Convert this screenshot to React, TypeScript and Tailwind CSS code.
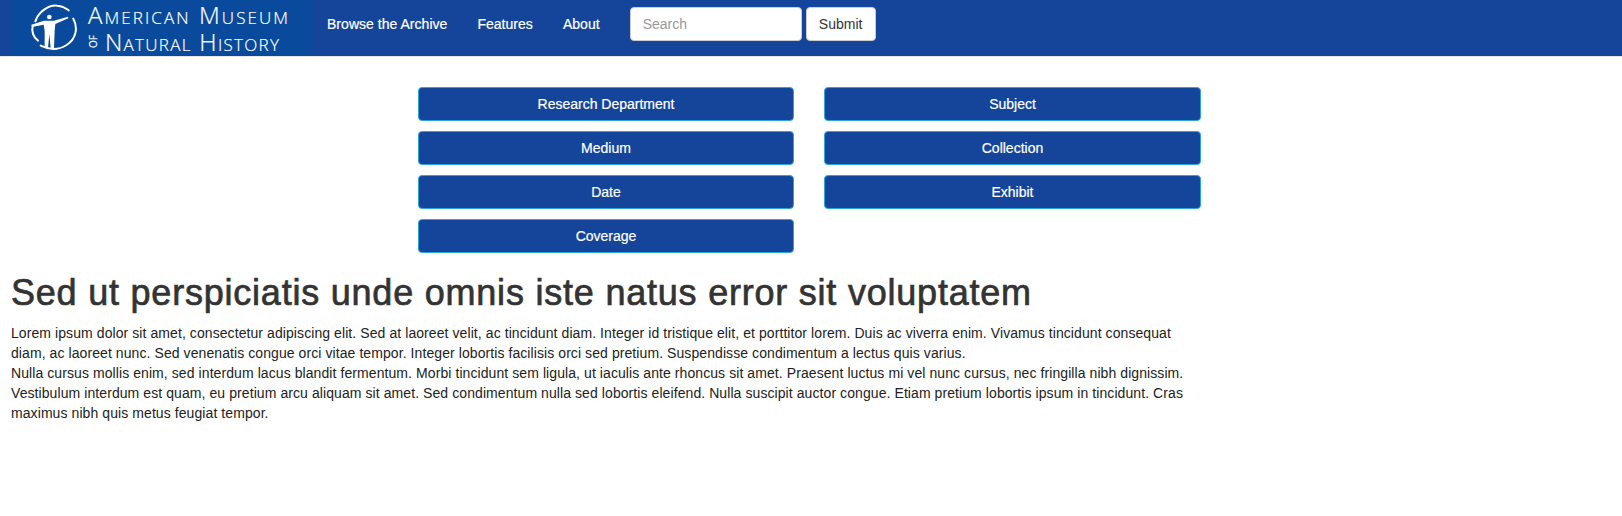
const NAV_LINKS = ["Browse the Archive", "Features", "About"];
const LEFT_BUTTONS = ["Research Department", "Medium", "Date", "Coverage"];
const RIGHT_BUTTONS = ["Subject", "Collection", "Exhibit"];

function LogoMark() {
  // viewBox is in 3x reference pixels
  return (
    <svg width="48" height="50" viewBox="30 15 144 150" fill="none" stroke="white" className="shrink-0">
      <path d="M46 70 C 55 42, 85 20, 112 23 C 125 24, 136 29, 146 37" strokeWidth="6" strokeLinecap="round" />
      <path d="M38 84 C 34 100, 40 118, 54 128" strokeWidth="6" strokeLinecap="round" />
      <path d="M160 62 C 176 92, 166 125, 140 141 C 118 155, 92 158, 62 143" strokeWidth="6" strokeLinecap="round" />
      <circle cx="88" cy="57" r="7" fill="white" stroke="none" />
      <path d="M34 80 L72 68 L102 68 L144 56 L145 61 L106 78 L104 100 L102 150 L92 150 L88 108 L84 150 L74 150 L74 100 L71 80 L36 87 Z" fill="white" stroke="none" />
    </svg>
  );
}

function Logo() {
  return (
    <div className="flex h-14 w-[300px] items-center gap-[10px] bg-[#0a4a9c] pl-[18px] pb-[1px] text-white font-['Open_Sans',sans-serif] font-light [-webkit-text-stroke:0.2px_white]">
      <LogoMark />
      <div className="flex flex-col [font-variant:small-caps]">
        <span className="text-[24px] leading-[27px] whitespace-nowrap tracking-[2.1px]">American Museum</span>
        <span className="flex items-center gap-[7px] text-[24px] leading-[27px] whitespace-nowrap tracking-[1.3px]">
          <span className="text-[10px] leading-[10px] tracking-normal uppercase font-normal [writing-mode:vertical-rl] rotate-180">of</span>
          Natural History
        </span>
      </div>
    </div>
  );
}

function CategoryButton({ label }: { label: string }) {
  return (
    <button className="h-[34px] w-full rounded border border-[#2fa4d8] bg-[#14459a] text-sm text-white [-webkit-text-stroke:0.2px_white]">
      {label}
    </button>
  );
}

export default function App() {
  return (
    <div className="min-h-screen bg-white font-['Liberation_Sans',Arial,sans-serif] text-sm text-[#333]">
      <nav className="flex h-[57px] items-start border-b border-[#e7e7e7] bg-[#14459a] pl-3">
        <Logo />
        <ul className="ml-[15px] flex gap-[30px] pt-[14px]">
          {NAV_LINKS.map((link) => (
            <li key={link} className="leading-5 tracking-[0.03px] text-white [-webkit-text-stroke:0.2px_white]">{link}</li>
          ))}
        </ul>
        <form className="ml-[30px] mt-[7px] flex gap-1">
          <input
            placeholder="Search"
            className="h-[34px] w-[172px] rounded border border-[#ccc] bg-white px-3 text-sm placeholder:text-[#999]"
          />
          <button type="button" className="h-[34px] w-[70px] rounded border border-[#ccc] bg-white text-sm text-[#333]">
            Submit
          </button>
        </form>
      </nav>

      <div className="ml-[418px] mt-[30px] grid w-[783px] grid-cols-[376px_377px] gap-x-[30px]">
        <div className="flex flex-col gap-[10px]">
          {LEFT_BUTTONS.map((label) => <CategoryButton key={label} label={label} />)}
        </div>
        <div className="flex flex-col gap-[10px]">
          {RIGHT_BUTTONS.map((label) => <CategoryButton key={label} label={label} />)}
        </div>
      </div>

      <main className="mt-5 w-[1200px] pl-[11px]">
        <h1 className="text-4xl leading-[40px] tracking-[0.78px] whitespace-nowrap [-webkit-text-stroke:0.7px_#333]">
          Sed ut perspiciatis unde omnis iste natus error sit voluptatem
        </h1>
        <p className="mt-[10px] leading-5 tracking-[0.08px] text-[#222]">
          Lorem ipsum dolor sit amet, consectetur adipiscing elit. Sed at laoreet velit, ac tincidunt diam. Integer id tristique elit, et porttitor lorem. Duis ac viverra enim. Vivamus tincidunt consequat diam, ac laoreet nunc. Sed venenatis congue orci vitae tempor. Integer lobortis facilisis orci sed pretium. Suspendisse condimentum a lectus quis varius.
          <br />
          Nulla cursus mollis enim, sed interdum lacus blandit fermentum. Morbi tincidunt sem ligula, ut iaculis ante rhoncus sit amet. Praesent luctus mi vel nunc cursus, nec fringilla nibh dignissim. Vestibulum interdum est quam, eu pretium arcu aliquam sit amet. Sed condimentum nulla sed lobortis eleifend. Nulla suscipit auctor congue. Etiam pretium lobortis ipsum in tincidunt. Cras maximus nibh quis metus feugiat tempor.
        </p>
      </main>
    </div>
  );
}
